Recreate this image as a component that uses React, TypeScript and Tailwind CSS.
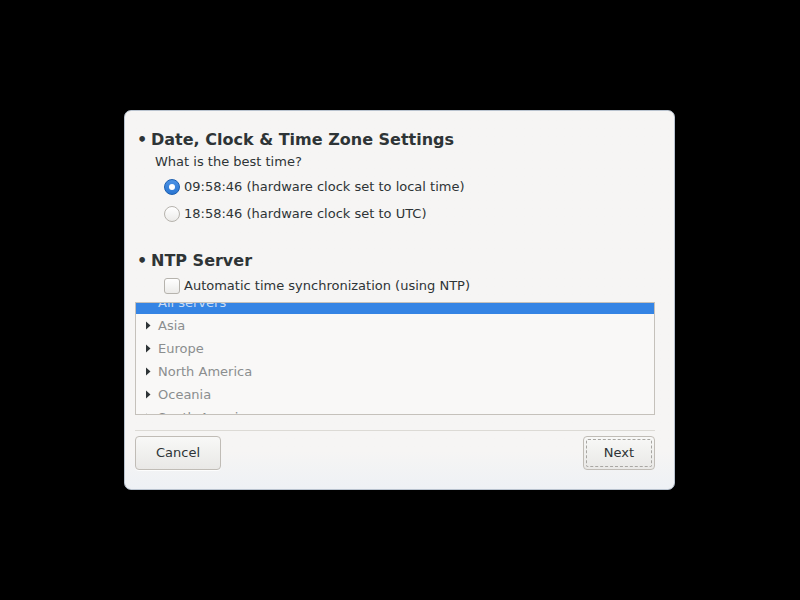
import React from "react";

const rows = ["Asia", "Europe", "North America", "Oceania", "South America"];

function Arrow() {
  return (
    <svg width="6" height="9" viewBox="0 0 6 9" className="shrink-0">
      <path d="M1 0.5 L5.5 4.5 L1 8.5 Z" fill="#2e3436" />
    </svg>
  );
}

export default function App() {
  return (
    <div
      className="w-[800px] h-[600px] bg-black flex items-start justify-start"
      style={{ fontFamily: '"DejaVu Sans", sans-serif' }}
    >
      <div className="ml-[124px] mt-[110px] w-[551px] h-[380px] rounded-[7px] border border-[#b9c3cf] bg-gradient-to-b from-[#f6f5f4] from-90% to-[#eef1f5] flex flex-col px-[10px] pt-[19px]">
        <div className="flex items-center text-[16px] font-bold text-[#2e3436] leading-[20px] pl-[2px]">
          <span className="w-[14px]">•</span>
          <span>Date, Clock &amp; Time Zone Settings</span>
        </div>
        <div className="text-[13px] text-[#2e3436] leading-[17px] mt-[3px] pl-[20px]">
          What is the best time?
        </div>
        <div className="flex items-center mt-[8px] pl-[29px] h-[18px]">
          <span className="w-[16px] h-[16px] rounded-full bg-gradient-to-b from-[#4c93e6] to-[#2a76d2] border border-[#1c5fb0] flex items-center justify-center">
            <span className="w-[6px] h-[6px] rounded-full bg-white" />
          </span>
          <span className="ml-[4px] text-[13px] text-[#2e3436]">
            09:58:46 (hardware clock set to local time)
          </span>
        </div>
        <div className="flex items-center mt-[9px] pl-[29px] h-[18px]">
          <span className="w-[16px] h-[16px] rounded-full bg-gradient-to-b from-[#ffffff] to-[#ecebe9] border border-[#b6b3ad]" />
          <span className="ml-[4px] text-[13px] text-[#2e3436]">
            18:58:46 (hardware clock set to UTC)
          </span>
        </div>
        <div className="flex items-center text-[16px] font-bold text-[#2e3436] leading-[20px] pl-[2px] mt-[28px]">
          <span className="w-[14px]">•</span>
          <span>NTP Server</span>
        </div>
        <div className="flex items-center mt-[6px] pl-[29px] h-[18px]">
          <span className="w-[16px] h-[16px] rounded-[3px] bg-gradient-to-b from-[#ffffff] to-[#ecebe9] border border-[#b6b3ad]" />
          <span className="ml-[4px] text-[13px] text-[#2e3436]">
            Automatic time synchronization (using NTP)
          </span>
        </div>
        <div className="mt-[7px] w-[520px] h-[113px] border border-[#c5c1bb] bg-[#f9f8f7] overflow-hidden flex flex-col shrink-0">
          <div className="h-[23px] shrink-0 -mt-[12px] bg-[#3584e4] flex items-center pl-[22px] text-[13px] text-[#c9dcf4]">
            All servers
          </div>
          {rows.map((r) => (
            <div key={r} className="h-[23px] shrink-0 flex items-center pl-[9px] text-[13px] text-[#8b8e8f]">
              <Arrow />
              <span className="ml-[7px]">{r}</span>
            </div>
          ))}
        </div>
        <div className="mt-[15px] w-[520px] h-px bg-[#dcdad5]" />
        <div className="mt-[5px] w-[520px] flex justify-between">
          <button className="w-[86px] h-[34px] rounded-[4px] border border-[#c0bcb6] bg-gradient-to-b from-[#f8f8f7] to-[#e9e8e6] text-[13px] text-[#2e3436] shadow-[0_1px_0_rgba(255,255,255,0.8)]">
            Cancel
          </button>
          <button className="w-[72px] h-[34px] rounded-[4px] border border-[#c0bcb6] bg-gradient-to-b from-[#f8f8f7] to-[#e9e8e6] text-[13px] text-[#2e3436] p-[2px]">
            <span className="w-full h-full flex items-center justify-center border border-dashed border-[#a8a6a2] rounded-[2px]">
              Next
            </span>
          </button>
        </div>
      </div>
    </div>
  );
}
